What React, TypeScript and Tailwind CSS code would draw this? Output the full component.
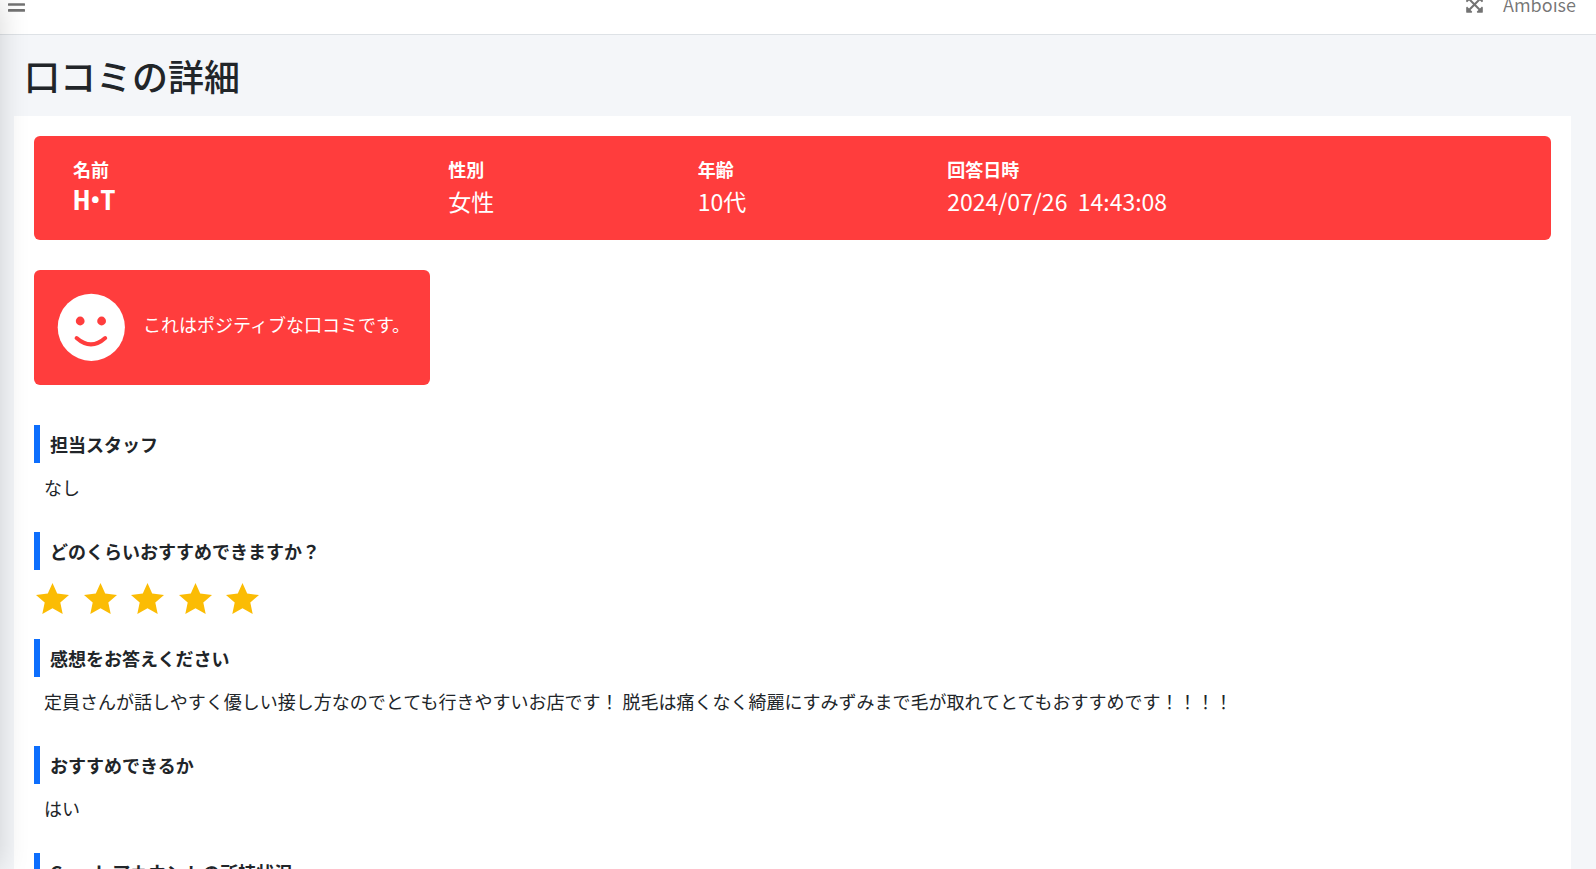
import type { ReactNode } from "react";
import { FaBars, FaExpandArrowsAlt } from "react-icons/fa";

const profile = [
  { label: "性別", value: "女性" },
  { label: "年齢", value: "10代" },
  { label: "回答日時", value: "2024/07/26  14:43:08" },
];

function Star() {
  return (
    <svg viewBox="0 0 33 31" className="h-[31px] w-[33px]" fill="#fbbc04" aria-hidden="true">
      <path d="M16.5 0 L21.2 10.6 L33 12 L24.3 19.6 L26.7 31 L16.5 25.2 L6.3 31 L8.7 19.6 L0 12 L11.8 10.6 Z" />
    </svg>
  );
}

function Smile() {
  return (
    <svg viewBox="0 0 68 68" className="size-[68px] shrink-0" aria-hidden="true">
      <circle cx="34.3" cy="34.3" r="33.6" fill="#fff" />
      <circle cx="23.2" cy="28" r="4.4" fill="#ff3d3d" />
      <circle cx="44.6" cy="28" r="4.4" fill="#ff3d3d" />
      <path d="M19.6 45 Q34 57.8 48.2 45" fill="none" stroke="#ff3d3d" strokeWidth="4" strokeLinecap="round" />
    </svg>
  );
}

function Section({ title, children }: { title: string; children?: ReactNode }) {
  return (
    <section className="h-[107px] shrink-0">
      <h2 className="flex h-[38px] items-center border-l-6 border-[#0d6efd] pl-2.5 text-[18px] leading-[27px] font-bold">
        {title}
      </h2>
      {children}
    </section>
  );
}

function Answer({ children }: { children: ReactNode }) {
  return <p className="mt-[11px] px-2.5 text-[18px] leading-[27px]">{children}</p>;
}

export default function App() {
  return (
    <div className="relative flex h-screen flex-col overflow-hidden bg-[#f4f6f9] font-['Noto_Sans_CJK_JP',sans-serif] text-[#212529]">
      <aside className="absolute inset-y-0 right-full z-10 w-[250px] shadow-[0_0_28px_rgba(0,0,0,0.16)]" />

      <header className="h-[35px] shrink-0 overflow-hidden border-b border-[#dee2e6] bg-white">
        <nav className="-mt-[22px] flex h-[52px] items-center justify-between pr-5 pl-2 text-[18px] leading-[27px] text-black/55">
          <button type="button" aria-label="メニュー">
            <FaBars className="h-[19px] w-[17px]" preserveAspectRatio="none" />
          </button>
          <div className="flex items-center gap-5">
            <button type="button" aria-label="全画面表示">
              <FaExpandArrowsAlt className="h-[19px] w-[17px]" />
            </button>
            <a href="#amboise">Amboise</a>
          </div>
        </nav>
      </header>

      <h1 className="px-6 py-[19px] text-[36px] leading-[43px] font-medium">口コミの詳細</h1>

      <main className="mr-[25px] ml-3.5 flex grow flex-col bg-white p-5">
        <div className="grid h-[104px] shrink-0 grid-cols-[3fr_2fr_2fr_5fr] rounded-md bg-[#ff3d3d] px-2.5 pt-5 text-white">
          <div className="pl-[29px]">
            <p className="text-[18px] leading-[27px] font-bold">名前</p>
            <p className="font-['Roboto_Condensed','Roboto',sans-serif] text-[28px] leading-[36px] font-bold">H•T</p>
          </div>
          {profile.map((item) => (
            <div key={item.label} className="pl-[30px]">
              <p className="text-[18px] leading-[27px] font-bold">{item.label}</p>
              <p className="text-[23px] leading-[36px] whitespace-pre">{item.value}</p>
            </div>
          ))}
        </div>

        <div className="mt-[30px] flex h-[115px] w-[396px] shrink-0 rounded-md bg-[#ff3d3d] pt-[23px] pl-[23px] text-white">
          <Smile />
          <p className="mt-[18px] ml-[18px] text-[18px] leading-[27px] whitespace-nowrap">これはポジティブな口コミです。</p>
        </div>

        <div className="mt-10">
          <Section title="担当スタッフ">
            <Answer>なし</Answer>
          </Section>
          <Section title="どのくらいおすすめできますか？">
            <div className="mt-[13px] grid w-[240px] grid-cols-5 pl-0.5" role="img" aria-label="5">
              <Star />
              <Star />
              <Star />
              <Star />
              <Star />
            </div>
          </Section>
          <Section title="感想をお答えください">
            <Answer>
              定員さんが話しやすく優しい接し方なのでとても行きやすいお店です！ 脱毛は痛くなく綺麗にすみずみまで毛が取れてとてもおすすめです！！！！
            </Answer>
          </Section>
          <Section title="おすすめできるか">
            <Answer>はい</Answer>
          </Section>
          <Section title="Googleアカウントの所持状況" />
        </div>
      </main>
    </div>
  );
}
